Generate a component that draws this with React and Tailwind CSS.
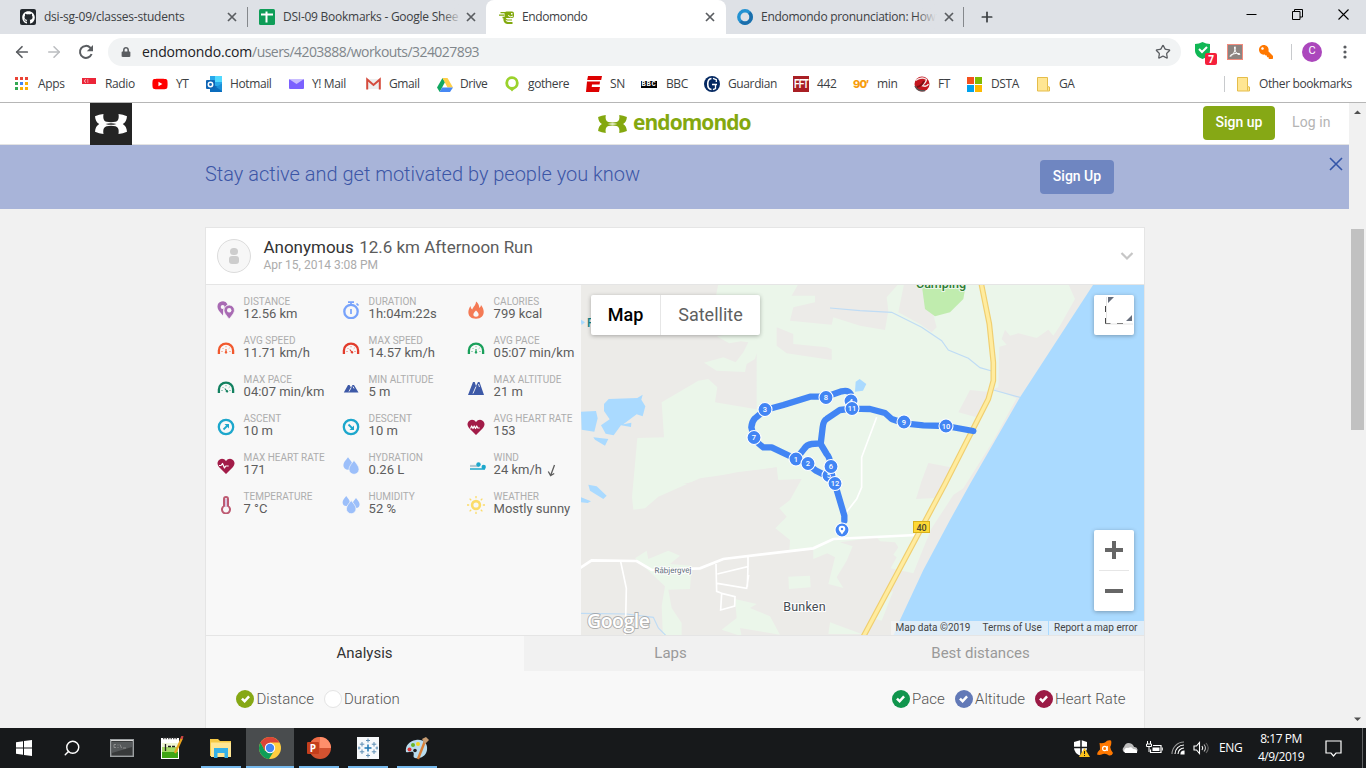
import React from "react";
import { ArrowLeft, ArrowRight, Star, Plus, Search } from "lucide-react";
import { FaGithub, FaLock, FaKey, FaYoutube } from "react-icons/fa";

const ui = "font-['Open_Sans','Noto_Sans',sans-serif]";

/* ---------- browser chrome ---------- */

function CloseTab() {
  return (
    <svg width="10" height="10" viewBox="0 0 10 10" className="shrink-0" stroke="#5a5d61" strokeWidth="1.7">
      <path d="M1 1l8 8M9 1l-8 8" />
    </svg>
  );
}

function SheetsIcon() {
  return (
    <svg width="16" height="16" viewBox="0 0 16 16">
      <rect width="16" height="16" rx="1.5" fill="#0f9d58" />
      <path d="M2 5.500h12M7.500 2.500v11" stroke="#fff" strokeWidth="2" />
    </svg>
  );
}

function EndoIcon() {
  return (
    <svg width="16" height="13" viewBox="0 0 16 13" fill="none" stroke="#82a90e">
      <path d="M7.500.500h5.500q2 0 2 2v2.500q0 2-2 2H7.500q-2 0-2-2V2.500q0-2 2-2z" fill="#82a90e" stroke="none" />
      <path d="M1.500 1.700h5M0 4.200h5M3.500 6.500h4" strokeWidth="1.300" />
      <path d="M5.500 7q-.5 5 4 5h4" strokeWidth="2.200" />
      <path d="M6 7.200q.5 2 3 1.800h4" strokeWidth="1.200" />
      <path d="M9 4.500q3 2.500 5 .5" stroke="#fff" />
      <path d="M12 2h1.500v1.500H12z" fill="#fff" stroke="none" />
    </svg>
  );
}

function TabStrip() {
  return (
    <div className={`flex h-[34px] w-full shrink-0 bg-[#dee1e6] text-[12px] leading-[34px] text-[#3c4043] ${ui}`}>
      <div className="flex w-[248px] items-center pl-5">
        <span className="flex h-4 w-4 items-center justify-center rounded-[2px] bg-[#24292e]"><FaGithub size={13} color="#fff" /></span>
        <span className="ml-2 w-[183px] whitespace-nowrap tracking-[-0.22px]">dsi-sg-09/classes-students</span>
        <CloseTab />
        <span className="ml-[10px] h-5 w-px bg-[#85888c]" />
      </div>
      <div className="flex w-[238px] items-center pl-[11px]">
        <SheetsIcon />
        <span className="relative ml-2 w-[179px] whitespace-nowrap tracking-[-0.25px]">
          DSI-09 Bookmarks - Google Shee
          <span className="absolute right-0 top-0 h-full w-5 bg-gradient-to-r from-transparent to-[#dee1e6]" />
        </span>
        <span className="ml-[4px] flex"><CloseTab /></span>
      </div>
      <div className="flex h-[34px] w-[240px] items-center rounded-t-[8px] bg-white pl-[13px]">
        <EndoIcon />
        <span className="ml-[7px] w-[183px] tracking-[-0.38px]">Endomondo</span>
        <CloseTab />
      </div>
      <div className="flex w-[239px] items-center pl-[11px]">
        <svg width="16" height="16" viewBox="0 0 16 16"><circle cx="8" cy="8" r="6.200" fill="none" stroke="#2392d2" strokeWidth="3.400" /><path d="M12.400 3.600a6.200 6.200 0 0 1-8.800 8.800" stroke="#1b6eab" strokeWidth="3.400" fill="none" /></svg>
        <span className="relative ml-2 w-[176px] whitespace-nowrap tracking-[-0.28px]">
          Endomondo pronunciation: How
          <span className="absolute right-[1px] top-0 h-full w-5 bg-gradient-to-r from-transparent to-[#dee1e6]" />
        </span>
        <span className="ml-[7px] flex"><CloseTab /></span>
        <span className="ml-[9px] h-5 w-px bg-[#85888c]" />
      </div>
      <div className="flex flex-1 items-center pl-[14px]"><Plus size={16} strokeWidth={2.6} color="#3c4043" /></div>
      <div className="flex items-start gap-[35px] pr-[17px] pt-[9px]">
        <svg width="11" height="11" viewBox="0 0 11 11"><path d="M0.500 5.500h10" stroke="#000" /></svg>
        <svg width="11" height="11" viewBox="0 0 11 11" fill="none" stroke="#000"><path d="M.5 2.500h7.500v8H.5zM2.500 2.500V.5h8v7.500H8" /></svg>
        <svg width="11" height="11" viewBox="0 0 11 11" stroke="#000" strokeWidth="1.100"><path d="M.5.500l10 10M10.500.500l-10 10" /></svg>
      </div>
    </div>
  );
}

function Toolbar() {
  return (
    <div className={`flex h-[35px] w-full shrink-0 items-center bg-white ${ui}`}>
      <div className="flex w-[108px] items-center pl-[13px]">
        <ArrowLeft size={18} strokeWidth={2.3} color="#5a5d61" />
        <ArrowRight size={18} strokeWidth={2.1} color="#bbbdc0" className="ml-[14px]" />
        <svg width="16" height="16" viewBox="0 0 16 16" className="ml-[15px]" fill="none" stroke="#5a5d61" strokeWidth="2">
          <path d="M13.600 10A6 6 0 1 1 12.300 3.700L14 5.300" />
          <path d="M15 1v6.200H8.800z" fill="#5a5d61" stroke="none" />
        </svg>
      </div>
      <div className="flex h-7 w-[1073px] items-center rounded-full bg-[#f1f3f4] pl-[13px] pr-[10px]">
        <FaLock size={10} color="#5a5d61" />
        <span className="ml-[11px] flex-1 whitespace-nowrap text-[14px] tracking-[-0.16px] text-[#202124]">
          endomondo.com<span className="tracking-[-0.55px] text-[#80868b]">/users/4203888/workouts/324027893</span>
        </span>
        <Star size={16} strokeWidth={1.9} color="#5a5d61" />
      </div>
      <div className="flex flex-1 items-center pl-[14px]">
        <span className="relative flex h-5 w-[22px]">
          <svg width="15" height="17" viewBox="0 0 15 17"><path d="M0 2q4 0 7.500-2Q11 2 15 2v7q0 5-7.500 8Q0 14 0 9z" fill="#11b755" /><path d="M4 7l3 3 5-5" stroke="#fff" strokeWidth="2" fill="none" /></svg>
          <span className="absolute left-[10px] top-[11px] flex h-3 w-3 items-center justify-center rounded-[2px] bg-[#f5203c] text-[10px] font-bold leading-none text-white">7</span>
        </span>
        <svg width="16" height="16" viewBox="0 0 16 16" className="ml-[10px]">
          <rect x=".5" y=".5" width="15" height="15" fill="#8c8380" stroke="#f28b7d" />
          <path d="M3 12.500q-.5-1.500 3-2.500t6.500-.5q1 1-.5 1.200C9 10 7.500 6 7.500 3q1-1 .8 1C8 8 5 12 3.500 12.500" stroke="#fff" strokeWidth="1" fill="none" />
        </svg>
        <FaKey size={14} color="#ff7800" className="ml-4 -scale-x-100" />
        <span className="ml-[18px] h-4 w-px bg-[#c8cacd]" />
        <span className="ml-[10px] flex h-5 w-5 items-center justify-center rounded-full bg-[#ab47bc] font-[Roboto] text-[11px] text-white">C</span>
        <svg width="4" height="14" viewBox="0 0 4 14" className="ml-[21px]" fill="#5a5d61"><circle cx="2" cy="2" r="1.600" /><circle cx="2" cy="7" r="1.600" /><circle cx="2" cy="12" r="1.600" /></svg>
      </div>
    </div>
  );
}

const icons = {
  apps: (
    <svg width="14" height="14" viewBox="0 0 14 14">
      <path d="M0 0h3v3H0zM5 0h3v3H5zM10 0h3v3h-3z" fill="#ea4335" />
      <path d="M0 5h3v3H0zM0 10h3v3H0z" fill="#34a853" /><path d="M5 5h3v3H5z" fill="#4285f4" /><path d="M10 5h3v3h-3zM10 10h3v3h-3zM5 10h3v3H5z" fill="#fbaf05" />
    </svg>
  ),
  radio: <svg width="15" height="16" viewBox="0 0 15 16"><path d="M1 2h14v6H1z" fill="#ec2538" /><path d="M5 3.500a1.500 1.500 0 1 0 0 3" fill="none" stroke="#f8b3ba" /><path d="M6 4h2M6 6h2" stroke="#f8b3ba" strokeDasharray="1 .6" /></svg>,
  yt: <FaYoutube size={16} color="#f00" />,
  outlook: (
    <svg width="16" height="16" viewBox="0 0 16 16"><path d="M4 0h12v15H4z" fill="#28a8ea" /><path d="M9 0h7v6H9z" fill="#50d9ff" /><path d="M4 8l12 4v4H4z" fill="#0a6cbd" /><path d="M16 7.500V15l-6-4z" fill="#1a8fd8" /><rect y="4" width="9" height="9" rx="1" fill="#0f65b5" /><circle cx="4.500" cy="8.500" r="2.200" fill="none" stroke="#fff" strokeWidth="1.500" /></svg>
  ),
  ymail: <svg width="15" height="16" viewBox="0 0 15 16"><rect y="3" width="15" height="10" rx="1" fill="#7b61ff" /><path d="M0 3h15l-7.500 5z" fill="#c9bdff" /></svg>,
  gmail: <svg width="15" height="16" viewBox="0 0 15 16"><path d="M1 3h13v10H1z" fill="#eee" /><path d="M1.200 13.500V3.500L7.500 9l6.300-5.500v10" fill="none" stroke="#d54b3d" strokeWidth="2" /></svg>,
  drive: <svg width="16" height="15" viewBox="0 0 16 15"><path d="M5.500 1L0 10.500 2.700 15 8 5z" fill="#11a861" /><path d="M5.500 1h5L16 10.500h-5.500z" fill="#ffcf48" /><path d="M5 10.500h11L13 15H2.700z" fill="#4688f4" /></svg>,
  gothere: <svg width="14" height="16" viewBox="0 0 14 16"><path d="M7 15.500L3 11h8z" fill="#98cf28" /><circle cx="7" cy="7" r="5.300" fill="#fff" stroke="#9bd22c" strokeWidth="2.800" /></svg>,
  espn: <svg width="16" height="16" viewBox="0 0 16 16" fill="#d00"><path d="M2 0h14l-.8 4H1.200zM1 5.500h13l-.4 3H6l-.3 2.500H14L13 16H0z" /></svg>,
  bbc: <span className="flex h-[7px] w-[16px] items-center justify-center bg-black font-['Liberation_Mono',monospace] text-[7px] font-bold leading-none tracking-[0.8px] text-white">BBC</span>,
  guardian: <svg width="16" height="16" viewBox="0 0 16 16"><circle cx="8" cy="8" r="8" fill="#052962" /><path d="M7.500 2.500C2.500 3 2.500 13 7.500 13.500" fill="none" stroke="#fff" strokeWidth="1.600" /><path d="M9 2.300l3.300 1.400v2.300M8 8.500h5M11.500 8.500V12.500L9 13.700" fill="none" stroke="#fff" strokeWidth="1.300" /></svg>,
  fft: <span className="flex h-4 w-4 items-center justify-center bg-[#a91f24] font-['Liberation_Sans',sans-serif] text-[9px] font-bold leading-none tracking-[-0.8px] text-white"><span className="scale-y-[1.5]">FFT</span></span>,
  min: <span className="w-4 font-[Inter] text-[11px] font-extrabold leading-none tracking-[-0.9px] text-[#f79c0c]">90′</span>,
  ft: <svg width="16" height="16" viewBox="0 0 16 16"><circle cx="8" cy="8" r="7.500" fill="#c4161f" /><path d="M1.500 4.500Q8 0 12.500 3.500 12 7 8 9.500q5 2 6.500-1.500" stroke="#f4e9e9" fill="none" strokeWidth="1.400" /><path d="M1 10q3 6 10 4.500" stroke="#555" fill="none" strokeWidth="1.500" /><path d="M3 11q5-1 7-6" stroke="#7d0d13" fill="none" strokeWidth="2" /></svg>,
  ms: <svg width="15" height="15" viewBox="0 0 15 15"><path d="M0 0h7v7H0z" fill="#f4511e" /><path d="M8 0h7v7H8z" fill="#80bc00" /><path d="M0 8h7v7H0z" fill="#00a2ed" /><path d="M8 8h7v7H8z" fill="#fcb900" /></svg>,
  folder: <svg width="13" height="15" viewBox="0 0 13 15"><path d="M.5.500h10v9l2 .5v4H.5z" fill="#ffe693" stroke="#e5bd4a" /><path d="M10.500 9.500v4" stroke="#e5bd4a" /></svg>,
};

const bookmarks = [
  ["apps", "Apps", "w-[66px]", "w-[23px]"],
  ["radio", "Radio", "w-[71px]", "w-6"],
  ["yt", "YT", "w-[54px]", "w-6"],
  ["outlook", "Hotmail", "w-[83px]", "w-6"],
  ["ymail", "Y! Mail", "w-[77px]", "w-[23px]"],
  ["gmail", "Gmail", "w-[71px]", "w-[23px]"],
  ["drive", "Drive", "w-[68px]", "w-[23px]"],
  ["gothere", "gothere", "w-[81px]", "w-[23px]"],
  ["espn", "SN", "w-[55px]", "w-6"],
  ["bbc", "BBC", "w-[63px]", "w-[25px]"],
  ["guardian", "Guardian", "w-[89px]", "w-6"],
  ["fft", "442", "w-[60px]", "w-6"],
  ["min", "min", "w-[61px]", "w-6"],
  ["ft", "FT", "w-[53px]", "w-6"],
  ["ms", "DSTA", "w-[70px]", "w-6"],
  ["folder", "GA", "w-[60px]", "w-[22px]"],
];

function Bookmarks() {
  return (
    <div className={`flex h-[34px] w-full shrink-0 items-center border-b border-[#b6b6b6] bg-white pb-[3px] pl-[15px] text-[12px] tracking-[-0.38px] text-[#3c4043] ${ui}`}>
      {bookmarks.map(([icon, label, w, iw]) => (
        <div key={label} className={`flex shrink-0 items-center whitespace-nowrap ${w}`}>
          <span className={`flex shrink-0 items-center ${iw}`}>{icons[icon]}</span>
          {label}
        </div>
      ))}
      <div className="ml-auto flex w-[142px] items-center whitespace-nowrap">
        <span className="mr-3 h-4 w-px bg-[#c8cacd]" />
        <span className="w-[22px]">{icons.folder}</span>
        Other bookmarks
      </div>
    </div>
  );
}

/* ---------- site ---------- */

function Hourglass({ w, h, color, bg }) {
  return (
    <svg width={w} height={h} viewBox="0 0 34 20">
      <path
        d="M1 2.200Q5 .4 9.500 0C8.800 4.500 9.800 7 12.500 7.800Q17 8.600 21.500 7.800C24.200 7 25.200 4.500 24.500 0Q29 .4 33 2.200C32.700 6 31.500 8.300 28.800 10C31.500 11.700 32.700 14 33 17.800Q29 19.600 24.500 20C25.200 15.500 24.200 13 21.500 12.200Q17 11.400 12.500 12.200C9.800 13 8.800 15.500 9.500 20Q5 19.600 1 17.800C1.300 14 2.500 11.700 5.200 10C2.500 8.300 1.300 6 1 2.200z"
        fill={color}
      />
      <path d="M11.500 10q5.500-1.700 11 0q-5.500 1.700-11 0z" fill={bg} />
    </svg>
  );
}

function SiteHeader() {
  return (
    <div className="flex h-[42px] w-full shrink-0 items-center border-b border-[#e3e3e3] bg-white">
      <div className="ml-[90px] flex h-[42px] w-[42px] shrink-0 items-center justify-center self-start bg-[#242424]"><Hourglass w={34} h={20} color="#fff" bg="#242424" /></div>
      <div className="ml-[465px] flex w-[606px] items-center">
        <Hourglass w={31} h={18} color="#84a80f" bg="#fff" />
        <span className="-mt-[3px] ml-[5px] font-['Open_Sans',sans-serif] text-[21px] font-bold leading-none tracking-[-0.95px] text-[#84a80f]">endomondo</span>
      </div>
      <div className="mb-[2px] flex h-[34px] w-[72px] items-center justify-center rounded-[4px] bg-[#86a815] font-[Roboto] text-[14px] font-medium text-white">Sign up</div>
      <div className="mb-[2px] ml-[17px] font-[Roboto] text-[14px] tracking-[0.1px] text-[#b4b4b4]">Log in</div>
    </div>
  );
}

function Banner() {
  return (
    <div className="flex h-16 w-full shrink-0 items-start bg-[#a8b4d9] font-[Roboto]">
      <div className="ml-[205px] w-[835px] pt-[14px] text-[20px] font-light leading-[30px] tracking-[-0.01px] text-[#3c56a6]">Stay active and get motivated by people you know</div>
      <div className="mt-[15px] flex h-[34px] w-[74px] items-center justify-center rounded-[4px] bg-[#6f86c1] pb-[2px] text-[14px] font-medium text-white">Sign Up</div>
      <svg width="14" height="14" viewBox="0 0 14 14" className="ml-[215px] mt-[12px]" stroke="#3455a8" strokeWidth="1.600"><path d="M1 1l12 12M13 1L1 13" /></svg>
    </div>
  );
}

function Gauge({ c, lean }) {
  return (
    <svg width="18" height="18" viewBox="0 0 18 18" fill="none" stroke={c}>
      <path d="M1.900 14V10.500a7.100 6.800 0 0 1 14.200 0v3.500" strokeWidth="2.300" />
      <path d="M4.500 11.500h1M12.500 11.500h1M5.500 8l.7.700M12.500 8l-.7.700M9 6.300v.9" strokeWidth=".8" />
      <path d={lean ? "M7.800 9.500l2.800 3.700" : "M9 9v4.500"} strokeWidth="1.100" /><circle cx={lean ? 10 : 9} cy="12.300" r=".8" fill={c} />
    </svg>
  );
}

function Heart({ line }) {
  return (
    <svg width="18" height="18" viewBox="0 0 18 18">
      <path d="M9 17L2 10Q-.8 6.500 1.500 3.500 3 1.800 5 1.800 7.500 1.800 9 4q1.500-2.200 4-2.200 2 0 3.500 1.700Q18.800 6.500 16 10z" fill="#a21c48" />
      <path d={line} fill="none" stroke="#fff" strokeWidth="1.200" strokeLinejoin="round" />
    </svg>
  );
}

const drop = (x, y, s) => `M${x} ${y}c${2 * s} ${2.6 * s} ${4 * s} ${4.6 * s} ${4 * s} ${7 * s}a${4 * s} ${4 * s} 0 0 1 ${-8 * s} 0c0 ${-2.4 * s} ${2 * s} ${-4.400 * s} ${4 * s} ${-7 * s}z`;

const statIcons = {
  distance: <svg width="18" height="18" viewBox="0 0 18 18" fill="#a86ab3"><path d="M6 14.500C2.500 10.500.5 8.500.5 6a5.300 5.300 0 0 1 10-2.800l-4.200 5z" /><circle cx="5.700" cy="6" r="2" fill="#f8f8f8" /><path d="M12.200 18C8.500 13.500 7 11.500 7 9.200a5.200 5.200 0 0 1 10.400 0c0 2.300-1.500 4.300-5.200 8.800z" stroke="#f8f8f8" strokeWidth=".7" /><circle cx="12.200" cy="9.200" r="2.200" fill="#f8f8f8" /></svg>,
  duration: <svg width="18" height="18" viewBox="0 0 18 18" fill="none" stroke="#78a3fb"><circle cx="9" cy="10.500" r="6.700" strokeWidth="2.300" /><path d="M9 8v5" strokeWidth="1.700" /><path d="M6 1.200h6M9 1v3M14.500 2.500l2 2" strokeWidth="1.700" /></svg>,
  calories: <svg width="18" height="18" viewBox="0 0 18 18"><path d="M9 .5c3 2 3 5 3.500 6.500 1-1 1.500-2 1.500-3C19 10 17 17.800 9 17.800S-.5 11 3.500 5c.3 2 .8 3 1.800 3.500C6 6 9 4 9 .5z" fill="#f47a55" /><path d="M9 15.800c-4-.5-3-3.800 0-6.300 3 2.500 4 5.800 0 6.300z" fill="#f8f8f8" /></svg>,
  mtnS: <svg width="18" height="18" viewBox="0 0 18 18" fill="#3d59a7"><path d="M1.800 13.500l4.200-7.500h1.500l1.500 2.500L10.500 6H12l4.500 7.500z" /><path d="M7 12.500l2.200-4M11 7.500l1 2" stroke="#f8f8f8" strokeWidth=".9" /></svg>,
  mtnL: <svg width="18" height="18" viewBox="0 0 18 18" fill="#3d59a7"><path d="M1 16L6 3h1.700L9 7l2-4h1.500l4.500 13z" /><path d="M6 14.500l3-7M11.500 5l1 3" stroke="#f8f8f8" strokeWidth=".9" /></svg>,
  ascent: <svg width="18" height="18" viewBox="0 0 18 18" fill="none" stroke="#1da7cc"><circle cx="9" cy="9" r="7.200" strokeWidth="2.300" /><path d="M6.500 11.500l4-4" strokeWidth="1.800" /><path d="M12 6v4.500L7.500 6z" fill="#1da7cc" stroke="none" /></svg>,
  descent: <svg width="18" height="18" viewBox="0 0 18 18" fill="none" stroke="#1da7cc"><circle cx="9" cy="9" r="7.200" strokeWidth="2.300" /><path d="M6.500 6.500l4 4" strokeWidth="1.800" /><path d="M12 12V7.500L7.500 12z" fill="#1da7cc" stroke="none" /></svg>,
  heartAvg: <Heart line="M3.500 10.500l1.200-2.500 1.300 2.500 1.200-2.500 1.300 2.500 1.200-2.500 1 2h2" />,
  heartMax: <Heart line="M2 8.500h2l1.500-2 2 4.500 1.200-2h3" />,
  hydration: <svg width="18" height="18" viewBox="0 0 18 18" fill="#9cbffa"><path d={drop(6, 0.2, 1.15)} /><path d={drop(12, 3.5, 1.25)} stroke="#f8f8f8" strokeWidth=".6" /></svg>,
  wind: <svg width="19" height="18" viewBox="0 0 19 18"><path d="M3 9h9" stroke="#b4c9d2" strokeWidth="2.200" /><path d="M3 12h15" stroke="#1da7cc" strokeWidth="1.500" /><circle cx="11.500" cy="7.500" r="2.200" fill="#1da7cc" /><circle cx="16.700" cy="10" r="2.200" fill="#1da7cc" /></svg>,
  temp: <svg width="18" height="18" viewBox="0 0 18 18"><path d="M7 10V3a2 2 0 0 1 4 0v7a4 4 0 1 1-4 0z" fill="none" stroke="#bd5a72" strokeWidth="2" /><path d="M9 3v8" stroke="#d9c4e0" strokeWidth="2" /><circle cx="9" cy="13" r="1.800" fill="#f8f8f8" /></svg>,
  humidity: <svg width="18" height="18" viewBox="0 0 18 18" fill="#9cbffa"><path d={drop(4.2, 0, 0.9)} /><path d={drop(14, 2, 0.9)} /><path d={drop(9.2, 4.5, 1.2)} stroke="#f8f8f8" strokeWidth=".7" /></svg>,
  weather: <svg width="18" height="18" viewBox="0 0 18 18" fill="none" stroke="#fbdc6a"><circle cx="9" cy="9" r="3.900" strokeWidth="2.600" /><path d="M9 0v2.200M9 15.800V18M0 9h2.200M15.800 9H18M2.600 2.600l1.600 1.600M13.800 13.800l1.600 1.600M2.600 15.400l1.600-1.600M13.800 4.200l1.600-1.600" strokeWidth="1.300" /></svg>,
};

const stats = [
  [statIcons.distance, "Distance", "12.56 km"],
  [statIcons.duration, "Duration", "1h:04m:22s"],
  [statIcons.calories, "Calories", "799 kcal"],
  [<Gauge c="#f1592e" />, "Avg speed", "11.71 km/h"],
  [<Gauge c="#e23c2c" lean />, "Max speed", "14.57 km/h"],
  [<Gauge c="#1aa05b" />, "Avg pace", "05:07 min/km"],
  [<Gauge c="#138160" lean />, "Max pace", "04:07 min/km"],
  [statIcons.mtnS, "Min altitude", "5 m"],
  [statIcons.mtnL, "Max altitude", "21 m"],
  [statIcons.ascent, "Ascent", "10 m"],
  [statIcons.descent, "Descent", "10 m"],
  [statIcons.heartAvg, "Avg heart rate", "153"],
  [statIcons.heartMax, "Max heart rate", "171"],
  [statIcons.hydration, "Hydration", "0.26 L"],
  [statIcons.wind, "Wind", "24 km/h"],
  [statIcons.temp, "Temperature", "7 °C"],
  [statIcons.humidity, "Humidity", "52 %"],
  [statIcons.weather, "Weather", "Mostly sunny"],
];

function Stats() {
  return (
    <div className="grid h-[350px] w-[375px] shrink-0 auto-rows-[39px] grid-cols-[125px_125px_125px] bg-[#f8f8f8] pt-[11px] font-[Roboto]">
      {stats.map(([icon, label, value]) => (
        <div key={label} className="flex items-start pl-[11px]">
          <span className="mt-[4.5px] flex w-[26.6px] shrink-0">{icon}</span>
          <span className="whitespace-nowrap">
            <span className="block text-[10px] uppercase leading-[11px] text-[#adadad]">{label}</span>
            <span className="flex items-center text-[13px] leading-[14px] tracking-[0px] text-[#5d5d5d]">
              {value}
              {label === "Wind" && <svg width="10" height="13" viewBox="0 0 10 13" className="ml-[5px]" fill="none" stroke="#5d5d5d" strokeWidth="1.300"><path d="M7.500 1L3.800 11M1.300 7.500l2.300 4 3.600-2" /></svg>}
            </span>
          </span>
        </div>
      ))}
    </div>
  );
}

const markers = [[765, 409.500, "3"], [754, 437.500, "7"], [826, 397.500, "8"], [851, 401, "4"], [852, 408.500, "11"], [904, 422, "9"], [946, 426, "10"], [796, 459, "1"], [808, 463.500, "2"], [829, 475.500, "5"], [831, 466.500, "6"], [835, 483.500, "12"]];

function MapView() {
  return (
    <div className="relative h-[350px] w-[563px] shrink-0 overflow-hidden font-[Roboto]">
      <svg width="563" height="350" viewBox="581 285 563 350" className="block">
        <rect x="581" y="285" width="563" height="350" fill="#ecebe8" />
        <g transform="translate(580 284) scale(0.33333)">
          <path fill="#ebf6ea" d="M415 0L408 35 450 150 410 157 448 178 483 172 505 175 490 205 467 235 430 220 372 236 410 260 495 264 500 240 525 225 530 207V376L405 355 412 310 385 285 355 290 245 355 252 460 172 462 156 640 160 677 195 673 235 638 360 583 590 550 592 588 665 585 630 648 598 673 620 698 586 733 630 768 628 800 700 793 700 825 742 808 765 820 745 900 790 912 770 880 800 830 818 787 780 775 890 760 900 772 945 775 955 790 940 812 950 820 932 853 1000 868 1030 793 1055 733 1120 633 1150 613 1240 470 1310 343 1240 315 1255 310 1258 188 1280 182 1265 165 1275 137 1290 155 1315 148 1370 162 1405 137 1420 155 1440 125 1485 45 1465 0z" />
          <path fill="#ecebe8" d="M655 0H955L920 40 925 80 915 138 840 125 760 100 755 122 630 110 640 70 705 55V35H635zM972 0H1035L1070 130 1055 145 1020 120 955 85zM590 130L640 150 640 180 740 190 755 196 755 228 620 208 590 185zM1170 318L1235 325 1190 400 1135 385zM1045 537L1112 550 1065 642 1008 645 1025 590zM310 600L470 565 590 550 595 590 400 600z" />
          <path fill="#ebf6ea" d="M545 45l55 10v35l-55-8zM165 823l35-23 5 25 60-25 35 15-30 25 65 5-5 70-65 2 10 55 30 45v70h-55l-5-120 10-60zM465 945l65 15-20 12 60 25 30 55-120-20 5 25-60-20 45-35zM625 878l65-3 2 35-65 5zM750 1015l95 35h-100zM925 930l15-10-35 90-18-5z" />
          <path fill="#c0ecae" d="M1025 0l10 75 30 22 45-12 40-40 8-45z" />
          <path fill="#aadaff" d="M1541 0L1320 340 1170 600 1110 708 1030 858 960 1008 938 1060H1700V0zM3 383l45-2 5 22-10 40-38-6zM72 360l14-15 86-3 16-10-4 15 12 20-8 30-18-6-40 30 24-5-1 13-30-5-22 30-24-5-14-25 26-18-17-25zM825 323l2-30 12-8 20 15-10 20zM40 460l45 5-10 20-30-18zM3 640l30 12-10 5-20-2zM25 602l25 5 30 28-10 10-40-25zM0 105l15 10-10 8z" />
          <path d="M750 72l90 8 95 5 90 45 60 40 20 28 60 25 35 28 35 10M1240 318l80 22M0 988l140 2 80 10 15 32 25 25" stroke="#bfdcf5" strokeWidth="3.500" fill="none" />
          <path d="M0 852l35-23 135 2 45 27 145-5 70-28 270-32 60-28 250-12" stroke="#fff" strokeWidth="8" fill="none" />
          <path d="M890 400l-45 120v90l-15 35-35 45M122 833l17 80-3 140M408 840l2 82 15 6-3 50 42-12 1-28-40-10M412 870l92-22v-30M504 848l-2 60M412 898l88 15 6-40" stroke="#fff" strokeWidth="5" fill="none" />
          <path d="M1204 0L1228 120 1240 235V290L1225 345 1095 600 850 1058" stroke="#f0cf70" strokeWidth="17" fill="none" />
          <path d="M1204 0L1228 120 1240 235V290L1225 345 1095 600 850 1058" stroke="#ffec9f" strokeWidth="10" fill="none" />
          <path d="M793 710V695L765 600 750 572 752 545Q750 520 740 510L722 480 728 430Q730 410 740 405L780 378 815 374 870 375 915 387 935 405 972 418 1030 424 1098 426 1180 441M722 478L695 480Q680 482 672 495L648 525 575 490H550Q535 480 522 462L514 430Q516 412 525 403L555 378 610 363 690 338H738L785 322Q805 317 812 330L815 374M648 525l35 15 25 20 40 20" stroke="#4285f4" strokeWidth="19" fill="none" strokeLinejoin="round" strokeLinecap="round" />
        </g>
        {markers.map(([x, y, n]) => (
          <g key={n}>
            <circle cx={x} cy={y} r="7" fill="#4285f4" stroke="#fff" strokeWidth="1.100" />
            <text x={x} y={y + 2.600} fontSize="7.500" fontWeight="500" fill="#fff" textAnchor="middle">{n}</text>
          </g>
        ))}
        <circle cx="842" cy="530" r="7" fill="#4285f4" stroke="#fff" strokeWidth="1.100" />
        <path d="M842 534.500c-2-3-3.300-4-3.300-5.500a3.300 3.300 0 0 1 6.600 0c0 1.500-1.300 2.500-3.300 5.500z" fill="#fff" /><circle cx="842" cy="529" r="1.200" fill="#4285f4" />
        <text x="941" y="288" fontSize="12.500" fontWeight="500" fill="#2e7d32" stroke="#ebf6ea" strokeWidth="2" paintOrder="stroke" textAnchor="middle">Camping</text>
        <text x="587" y="327" fontSize="12" fontWeight="500" fill="#12858a">F</text>
        <text x="804.500" y="610.500" fontSize="12.500" letterSpacing=".2" fill="#444b52" stroke="#fff" strokeWidth="2" paintOrder="stroke" textAnchor="middle">Bunken</text>
        <text x="673" y="573" fontSize="8" fill="#5f6f7c" stroke="#fff" strokeWidth="2" paintOrder="stroke" textAnchor="middle" transform="rotate(-1 673 573)">Råbjergvej</text>
        <rect x="913.500" y="521.500" width="16" height="11" fill="#fdd835" stroke="#d8b11c" />
        <text x="921.500" y="530.500" fontSize="9" fontWeight="500" fill="#4b4630" textAnchor="middle">40</text>
        <text x="587" y="627.500" fontFamily="'Open Sans', sans-serif" fontSize="19.500" letterSpacing="-.5" fontWeight="600" fill="#fff" stroke="#9a9a9a" strokeOpacity=".75" strokeWidth="1.800" paintOrder="stroke">Google</text>
      </svg>
      <div className="absolute left-[10px] top-[10px] flex h-10 items-center rounded-[2px] bg-white text-[18px] shadow-[0_1px_4px_rgba(0,0,0,0.3)]">
        <span className="w-[70px] border-r border-[#e6e6e6] text-center font-medium leading-10 text-black">Map</span>
        <span className="w-[99px] pb-px text-center text-[#5f5f5f]">Satellite</span>
      </div>
      <div className="absolute right-[10px] top-[10px] h-10 w-10 rounded-[2px] bg-white shadow-[0_1px_4px_rgba(0,0,0,0.3)]">
        <svg width="40" height="40" viewBox="0 0 40 40"><path d="M14 2v6l6-6zM38 20v6h-6z" fill="#666d7b" /><path d="M11.500 11v6M11.500 23v5.500h5M23 28.500h6" stroke="#444" fill="none" /><path d="M12.500 2v26M12 29H39" stroke="#ddd" strokeWidth=".8" /></svg>
      </div>
      <div className="absolute right-[10px] top-[245px] flex h-[81px] w-10 flex-col items-center rounded-[2px] bg-white shadow-[0_1px_4px_rgba(0,0,0,0.3)]">
        <svg width="40" height="40" viewBox="0 0 40 40" stroke="#666" strokeWidth="4"><path d="M11 20h18M20 11v18" /></svg>
        <span className="h-px w-[30px] bg-[#e6e6e6]" />
        <svg width="40" height="40" viewBox="0 0 40 40" stroke="#666" strokeWidth="4"><path d="M11 20h18" /></svg>
      </div>
      <div className="absolute bottom-0 right-0 flex h-[14px] text-[10px] leading-[14px] text-[#444]">
        <span className="w-[157px] whitespace-nowrap bg-[#f5f5f5]/70 pl-[4.5px]"><span className="inline-block w-[87px]">Map data ©2019</span>Terms of Use</span>
        <span className="ml-px w-[95px] whitespace-nowrap bg-[#f5f5f5]/70 pl-[5px]">Report a map error</span>
      </div>
    </div>
  );
}

function Toggle({ color, label, w }) {
  return (
    <span className={`flex items-center whitespace-nowrap ${w}`}>
      <span className={`mr-[2.5px] flex h-[18px] w-[18px] shrink-0 items-center justify-center rounded-full ${color}`}>
        <svg width="9" height="8" viewBox="0 0 10 9" fill="none" stroke="#fff" strokeWidth="2.800"><path d="M1 4l3 3 5-5.500" /></svg>
      </span>
      {label}
    </span>
  );
}

function WorkoutCard() {
  return (
    <div className="ml-[205px] mt-[18px] flex h-[501px] w-[940px] shrink-0 flex-col border border-b-0 border-[#e5e5e5] bg-white font-[Roboto]">
      <div className="flex h-[57px] shrink-0 items-center border-b border-[#e5e5e5] pl-[11px] pr-[10px]">
        <span className="flex h-[34px] w-[34px] flex-col items-center justify-center gap-px rounded-full border-[1.5px] border-[#dcdcdc] bg-[#f7f7f7]">
          <span className="h-[7px] w-[8px] rounded-full bg-[#cdcdcd]" /><span className="h-[8px] w-[10px] rounded-[3px] bg-[#cdcdcd]" />
        </span>
        <div className="-mt-px ml-[12.5px] flex-1 pb-[2px]">
          <div className="text-[17px] leading-[20px] tracking-[-0.02px] text-[#5c5c5c]"><span className="mr-[5.5px] text-[#333]">Anonymous</span>12.6 km Afternoon Run</div>
          <div className="pt-px text-[12px] leading-[14px] text-[#ababab]">Apr 15, 2014 3:08 PM</div>
        </div>
        <svg width="14" height="10" viewBox="0 0 14 10" fill="none" stroke="#c6c6c6" strokeWidth="2.200"><path d="M1.500 2L7 7.500 12.500 2" /></svg>
      </div>
      <div className="flex h-[350px] shrink-0"><Stats /><MapView /></div>
      <div className="flex h-[36px] shrink-0 border-t border-[#e5e5e5] bg-[#f1f1f1] text-center text-[15px] leading-[34px] text-[#9a9a9a]">
        <span className="w-[317px] bg-[#f8f8f8] text-[#333]">Analysis</span>
        <span className="w-px bg-[#f8f8f8]" />
        <span className="w-[293px]">Laps</span>
        <span className="w-[327px]">Best distances</span>
      </div>
      <div className="flex flex-1 justify-between bg-[#f8f8f8] pl-[30px] pr-[18.5px] text-[15px] font-light text-[#555]">
        <div className="flex h-[56px]">
          <Toggle color="bg-[#86a815]" label="Distance" w="w-[87.5px]" />
          <Toggle color="border border-[#e4e4e4] bg-white" label="Duration" w="" />
        </div>
        <div className="flex h-[56px]">
          <Toggle color="bg-[#10954d]" label="Pace" w="w-[63px]" />
          <Toggle color="bg-[#6279b7]" label="Altitude" w="w-[80px]" />
          <Toggle color="bg-[#9b1a45]" label="Heart Rate" w="" />
        </div>
      </div>
    </div>
  );
}

/* ---------- taskbar ---------- */

const taskIcons = [
  ["w-12", "start", <svg width="16" height="16" viewBox="0 0 16 16" fill="#fff"><path d="M0 2.200L7 1.200v6.300H0zM8 1l8-1v7.500H8zM0 8.500h7v6.300l-7-1zM8 8.500h8V16l-8-1.100z" /></svg>],
  ["w-12", "search", <Search size={18} strokeWidth={1.900} color="#fff" className="-scale-x-100" />],
  ["w-[52px]", "cmd", <svg width="24" height="18" viewBox="0 0 24 18"><rect x=".7" y=".7" width="22.600" height="16.600" fill="#383a3b" stroke="#9b9fa1" strokeWidth="1.400" /><path d="M1 1.500h22" stroke="#d5d5d5" /><path d="M2 3h20v5L2 14z" fill="#55585a" /><path d="M6 5.500H4v3h2M8 5.500v1M8 8v1M10 5.500l1.500 3.500M13 9h3" stroke="#999" strokeWidth=".8" fill="none" /></svg>],
  ["w-12", "editor", <svg width="24" height="24" viewBox="0 0 24 24"><path d="M1 2h18v21H1z" fill="#fff" /><path d="M2 16h16v6H2z" fill="#3fa514" /><path d="M2 11h16v5H2z" fill="#a5d966" /><path d="M2 7h16v4H2z" fill="#f0f6d4" /><path d="M3 2.500h15" stroke="#555" strokeDasharray="1.500 1" strokeWidth="1.500" /><path d="M5.500 8v7M8 10.500h3M12 10.500h3" stroke="#222" strokeWidth="1.300" /><path d="M22 2L15 17" stroke="#e8a21d" strokeWidth="2.300" /><path d="M22.500 0l-1 3" stroke="#c44" strokeWidth="2.300" /></svg>],
  ["w-[50px]", "explorer", <svg width="22" height="20" viewBox="0 0 22 20"><path d="M0 1h8l2 2h11v15H0z" fill="#f6c945" /><path d="M1 4.500h20V19H1z" fill="#ffe694" /><path d="M4 20V10h14v10h-3.500v-5h-7v5z" fill="#35b1e8" /></svg>],
  ["w-12", "chrome", <svg width="22" height="22" viewBox="0 0 22 22"><circle cx="11" cy="11" r="11" fill="#ffcd40" /><path d="M1.500 5.500A11 11 0 0 1 20.500 5.500H11L6 14z" fill="#db4437" /><path d="M1.500 5.500A11 11 0 0 0 10 22L15 14 6 14z" fill="#0f9d58" /><circle cx="11" cy="11" r="5.200" fill="#fff" /><circle cx="11" cy="11" r="4.200" fill="#4285f4" /></svg>],
  ["w-[50px]", "slides", <svg width="24" height="22" viewBox="0 0 24 22"><circle cx="13" cy="11" r="11" fill="#d35230" /><path d="M13 0a11 11 0 0 1 11 11H13z" fill="#ff8f6b" /><path d="M2 11h11V0A11 11 0 0 0 2 11z" fill="#ed6c47" /><rect y="5" width="12" height="12" rx="1" fill="#c43e1c" /><text x="6" y="14.500" fontSize="10" fontWeight="700" fill="#fff" fontFamily="Open Sans" textAnchor="middle">P</text></svg>],
  ["w-12", "tableau", <svg width="22" height="22" viewBox="0 0 22 22"><path d="M0 0h22v22H0z" fill="#f7f9fb" /><g stroke="#5f8fb5"><path d="M11 7.500v7M7.500 11h7" strokeWidth="1.500" stroke="#1f77b4" /><path d="M11 1.500v4M9 3.500h4M11 16.500v4M9 18.500h4M5 5v4.500M2.800 7.200h4.500M5 12.500V17M2.800 14.800h4.500M17 5v4.500M14.800 7.200h4.500M17 12.500V17M14.800 14.800h4.500M2 9.500v3M1 11h2.500M20 9.500v3M18.500 11H21" /></g></svg>],
  ["w-[50px]", "paint", <svg width="24" height="23" viewBox="0 0 24 23"><path d="M11 3c8-1 12 4 11 10-1 7-8 9-12 8-3-1 0-4-2-6-2-1-5 1-7 0C0 9 4 4 11 3z" fill="#b9dcee" /><circle cx="4.500" cy="12.500" r="2" fill="#de3434" /><circle cx="8" cy="8" r="2" fill="#67b52a" /><circle cx="13" cy="7" r="2" fill="#f3d51f" /><circle cx="10" cy="13.500" r="1.800" fill="#222" /><path d="M20 4L13 22" stroke="#d97f36" strokeWidth="2.400" /><path d="M17 2l4-2 3 3-4 4z" fill="#c79c73" /></svg>],
];
const running = ["explorer", "chrome", "slides", "tableau", "paint"];

function Taskbar() {
  return (
    <div className={`flex h-10 w-full shrink-0 bg-[#17191b] text-[12px] text-white ${ui}`}>
      {taskIcons.map(([w, id, icon]) => (
        <div key={id} className={`flex h-10 shrink-0 flex-col items-center ${w} ${id === "chrome" ? "bg-[#494c4e]" : ""}`}>
          <span className="flex h-[38px] w-full items-center justify-center pt-[2px]">{icon}</span>
          {running.includes(id) && <span className={`h-[2px] bg-[#76b9ed] ${id === "chrome" ? "w-full" : "w-10"}`} />}
        </div>
      ))}
      <div className="ml-auto flex w-[293px] items-center">
        <svg width="17" height="17" viewBox="0 0 17 17" className="mr-[7px]"><path d="M1 2l7-2 6 2v7q-2 5-6 7-7-3-7-8z" fill="#fff" /><path d="M8 0v16M1 7.500h13" stroke="#17191b" strokeWidth="1.500" /><path d="M11.500 8L17 17H6z" fill="#fcc21b" /><path d="M11.500 11v3M11.500 15v1" stroke="#17191b" /></svg>
        <svg width="16" height="16" viewBox="0 0 16 16" className="mr-2"><path d="M2.500 3q3 .5 5.500-.5Q10.500-.5 14 .5q1 3-.8 6.500Q13.500 10 16 13q-1 3-4 2.500Q9 13 6 14q-3.500 1.500-6 .5 0-2.500 3-5Q3 6 2.500 3z" fill="#ff7800" /><circle cx="7.700" cy="8.500" r="2.100" fill="none" stroke="#fff" strokeWidth="1.200" /><path d="M10.200 6v5" stroke="#fff" strokeWidth="1.200" /></svg>
        <svg width="17" height="12" viewBox="0 0 17 12" className="mr-2"><path d="M3 10a3 3 0 0 1 0-5q2-6 8-3 2 2 2 3a3 3 0 0 1 1 6z" fill="#bdbdbd" /><path d="M4 11a3 3 0 0 1 3-5q4-2 5 1 5 0 4 4z" fill="#fff" /></svg>
        <svg width="17" height="14" viewBox="0 0 17 14" className="mr-[8px]" fill="none" stroke="#fff"><path d="M7 4.500h8v7H4.500V8.500" strokeWidth="1.200" /><path d="M6.500 6.500h7v3.500h-7z" fill="#fff" stroke="none" /><path d="M1.500 0v3M4.500 0v3M.5 3h5v2.500h-5zM3 5v6M16.300 6.500v3" /></svg>
        <svg width="14" height="14" viewBox="0 0 14 14" className="mr-[8px]" fill="none" stroke="#fff" strokeWidth="1.100"><path d="M1 13A12 12 0 0 1 13 1" stroke="#999" /><path d="M4 13A9 9 0 0 1 13 4M7 13A6 6 0 0 1 13 7" /><path d="M10 13a3 3 0 0 1 3-3v3z" fill="#fff" /></svg>
        <svg width="17" height="14" viewBox="0 0 17 14" className="mr-[9px]" fill="none" stroke="#fff" strokeWidth="1.100"><path d="M1 5h2.500l3-3.500v11L3.500 9H1zM9 5q1.500 2 0 4" /><path d="M11 3.500q3 3.500 0 7" stroke="#bbb" /><path d="M13 2q4.500 5 0 10" stroke="#666" /></svg>
        <span className="w-[29px] text-[12px] tracking-[-0.4px]">ENG</span>
        <div className="flex w-[66px] flex-col items-center text-[12px] leading-[18px] tracking-[-0.48px]"><span>8:17 PM</span><span>4/9/2019</span></div>
        <svg width="17" height="17" viewBox="0 0 17 17" className="ml-[11px]" fill="none" stroke="#fff" strokeWidth="1.200"><path d="M1 1h15v12h-5l-2.500 3L6 13H1z" /></svg>
        <span className="ml-5 h-full w-px bg-[#606264]" />
      </div>
    </div>
  );
}

export default function App() {
  return (
    <div className="flex h-[768px] w-[1366px] flex-col overflow-hidden bg-white">
      <TabStrip />
      <Toolbar />
      <Bookmarks />
      <div className="flex h-[625px] shrink-0 overflow-hidden">
        <main className="flex w-[1349px] flex-col overflow-hidden bg-[#f1f1f1]">
          <SiteHeader />
          <Banner />
          <WorkoutCard />
        </main>
        <div className="flex w-[17px] flex-col items-center bg-[#f1f1f1]">
          <svg width="17" height="17" viewBox="0 0 17 17" fill="#505050"><path d="M5 11h7L8.500 7.500z" /></svg>
          <span className="mt-[109px] h-[201px] w-[13px] bg-[#c1c1c1]" />
          <svg width="17" height="17" viewBox="0 0 17 17" className="mt-auto" fill="#505050"><path d="M5 6.500h7L8.500 10z" /></svg>
        </div>
      </div>
      <Taskbar />
    </div>
  );
}
